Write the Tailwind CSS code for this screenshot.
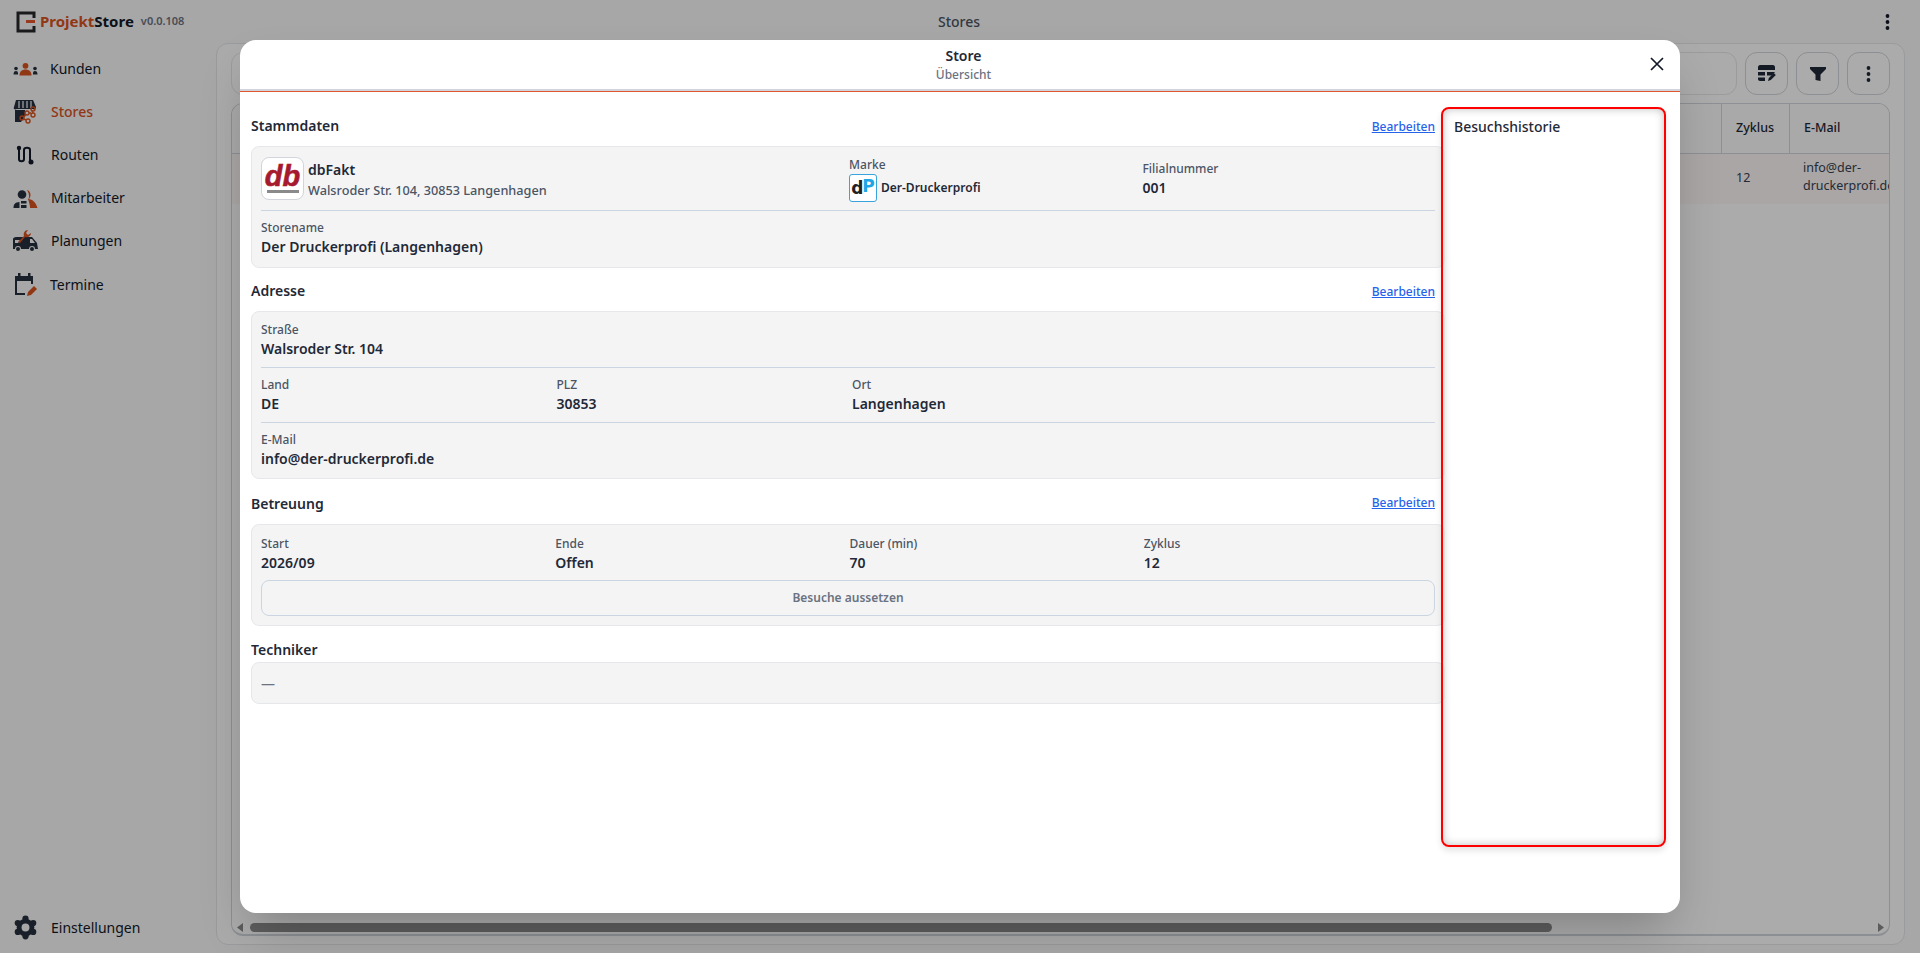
<!DOCTYPE html>
<html lang="de">
<head>
<meta charset="UTF-8" />
<title>ProjektStore - Stores</title>
<script src="https://cdn.jsdelivr.net/npm/@tailwindcss/browser@4"></script>
</head>
<body class="h-screen overflow-hidden bg-[#f9f9fa] text-[#1f2937] [font-family:'Noto_Sans',sans-serif]">

<!-- App dahinter -->
<div class="flex h-[953px] flex-col">
  <header class="flex h-[43px] shrink-0 items-center pl-[16px] pr-[30px]">
    <div class="flex w-[700px] items-center">
      <svg class="h-[22px] w-[20px]" viewBox="0 0 20 22"><path d="M18 7V2H2v18h16v-5" fill="none" stroke="#27272a" stroke-width="3"/><path d="M10 9h9v3h-9z" fill="#e4572e"/></svg>
      <span class="ml-[4px] text-[15px] font-bold text-[#111827]"><span class="text-[#d9531e]">Projekt</span>Store</span>
      <span class="ml-[7px] text-[11px] font-semibold text-[#6b7280]">v0.0.108</span>
    </div>
    <div class="flex-1 pl-[222px] text-[14px] font-medium text-[#4b5563]">Stores</div>
    <svg class="h-[16px] w-[5px]" viewBox="0 0 5 16" fill="#111827"><circle cx="2.5" cy="2" r="1.9"/><circle cx="2.5" cy="8" r="1.9"/><circle cx="2.5" cy="14" r="1.9"/></svg>
  </header>

  <div class="flex min-h-0 flex-1">
    <aside class="flex w-[216px] shrink-0 flex-col pb-[4px] pt-[4px] text-[14px] text-[#111827]">
      <a class="flex h-[43px] items-center gap-[13px] pl-[13px]">
        <svg class="h-[25px] w-[25px]" viewBox="0 0 25 25"><circle cx="12.5" cy="9.800" r="2.900" fill="#d9531e"/><path d="M6.500 19.500c0-4 2.500-6 6-6s6 2 6 6z" fill="#d9531e"/><circle cx="3" cy="12.500" r="1.800" fill="#27303f"/><path d="M0.500 18.500c0-2.500 1-3.500 2.500-3.500s2.200 1 2 3.500z" fill="#27303f"/><circle cx="22" cy="12.500" r="1.800" fill="#27303f"/><path d="M24.500 18.500c0-2.500-1-3.500-2.500-3.500s-2.200 1-2 3.500z" fill="#27303f"/></svg>
        <span class="-ml-[1px]">Kunden</span>
      </a>
      <a class="flex h-[43px] items-center gap-[13px] pl-[13px] font-medium text-[#d9531e]">
        <svg class="h-[25px] w-[25px]" viewBox="0 0 25 25"><path d="M3 1h17l3 7c0 2-2 3-3 2H4C2 11 0 10 1 8z" fill="#27303f"/><path d="M6 2v7M10 2v7M14 2v7M18 2v7" stroke="#f9f9fa" stroke-width="1.200"/><path d="M2 11h10v6l-4 6H2z" fill="#27303f"/><g fill="none" stroke="#d9531e" stroke-width="1.400"><circle cx="20" cy="10" r="2"/><circle cx="20" cy="16" r="2"/><circle cx="14" cy="14" r="2"/><circle cx="9" cy="19" r="2"/><circle cx="15" cy="22" r="2"/><path d="M16 14h2M19 12l1 2M11 18l2-3M11 20l2 1"/></g></svg>
        <span>Stores</span>
      </a>
      <a class="flex h-[43px] items-center gap-[13px] pl-[13px]">
        <svg class="h-[25px] w-[25px]" viewBox="0 0 25 25"><path d="M6 6v11c0 3 5 3 5 0V8c0-3 6-3 6 0v11" fill="none" stroke="#111827" stroke-width="2"/><circle cx="6" cy="6" r="2.200" fill="#111827"/><circle cx="18" cy="20" r="2.500" fill="#111827"/></svg>
        <span>Routen</span>
      </a>
      <a class="flex h-[43px] items-center gap-[13px] pl-[13px]">
        <svg class="h-[25px] w-[25px]" viewBox="0 0 25 25"><circle cx="9" cy="9.500" r="4.300" fill="#27303f"/><path d="M14 5c4 1 5 7 1 10 2-3 1-7-1-10z" fill="#d9531e"/><path d="M0.500 23c0-4 1.500-5.500 6-6v6z" fill="#27303f"/><path d="M8 16h5.500v2.500H8zM8 20h5.500v3H8z" fill="#27303f"/><path d="M15 14c5 0 8 4 9.500 9H17c0-3-1-6-2-9z" fill="#d9531e"/></svg>
        <span>Mitarbeiter</span>
      </a>
      <a class="flex h-[43px] items-center gap-[13px] pl-[13px]">
        <svg class="h-[25px] w-[25px]" viewBox="0 0 25 25"><path d="M3 9h13l3 0 5 6 1 6h-3a3 3 0 0 0-6 0H8a3 3 0 0 0-6 0H0V11c0-1 1.500-2 3-2z" fill="#27303f"/><path d="M17 11h2l3 4h-5z" fill="#f9f9fa"/><path d="M2 12h5l-2 3H2z" fill="#f9f9fa"/><circle cx="5" cy="21" r="2" fill="#27303f"/><circle cx="19" cy="21" r="2" fill="#27303f"/><path d="M5 14l6-6c-1-3 1-6 4-6l-2 3 2 2 3-2c0 3-3 5-6 4l-5 6z" fill="#d9531e"/></svg>
        <span>Planungen</span>
      </a>
      <a class="mt-[1px] flex h-[43px] items-center gap-[13px] pl-[13px]">
        <svg class="h-[25px] w-[25px]" viewBox="0 0 25 25"><path d="M2 4h18v8h-2V9H4v12h8v2H2z" fill="#27303f"/><path d="M5 1h2.500v4H5zM15 1h2.500v4H15z" fill="#27303f"/><path d="M14 24l1-4 6-6 3 3-6 6z" fill="#d9531e"/></svg>
        <span class="-ml-[1px]">Termine</span>
      </a>
      <a class="mt-auto flex h-[43px] items-center gap-[13px] pl-[13px]">
        <svg class="h-[25px] w-[25px]" viewBox="0 0 24 24"><g fill="#27303f"><circle cx="12" cy="12" r="8.500"/><circle cx="12" cy="3.500" r="3"/><circle cx="12" cy="20.500" r="3"/><circle cx="4.600" cy="7.750" r="3"/><circle cx="19.400" cy="7.750" r="3"/><circle cx="4.600" cy="16.250" r="3"/><circle cx="19.400" cy="16.250" r="3"/></g><circle cx="12" cy="12" r="3.800" fill="#f9f9fa"/></svg>
        <span>Einstellungen</span>
      </a>
    </aside>

    <main class="mb-[8px] mr-[15px] flex min-w-0 flex-1 flex-col rounded-xl border border-[#e5e7eb] bg-white px-[14px] pb-[8px] pt-[8px]">
      <div class="flex h-[43px] shrink-0 gap-[8px]">
        <div class="flex-1 rounded-xl border border-[#e5e7eb]"></div>
        <div class="flex w-[43px] items-center justify-center rounded-xl border border-[#d1d5db]">
          <svg class="h-[18px] w-[18px]" viewBox="0 0 18 18" fill="#1f2937"><path d="M0 2c0-1 1-2 2-2h13c1 0 2 1 2 2v3H0zM0 7h7v3.500H0zM9 7h8l-3 3.500H9zM0 12.500h7V16H2c-1 0-2-1-2-2z"/><path d="M10 16l.800-3 5-5 2 2-5 5z"/></svg>
        </div>
        <div class="flex w-[43px] items-center justify-center rounded-xl border border-[#d1d5db]">
          <svg class="h-[16px] w-[16px]" viewBox="0 0 16 16" fill="#1f2937"><path d="M0 1h16v2l-5.500 5.500V15l-5-1V8.500L0 3z"/></svg>
        </div>
        <div class="flex w-[43px] items-center justify-center rounded-xl border border-[#d1d5db]">
          <svg class="h-[16px] w-[5px]" viewBox="0 0 5 16" fill="#1f2937"><circle cx="2.500" cy="2" r="1.900"/><circle cx="2.500" cy="8" r="1.900"/><circle cx="2.500" cy="14" r="1.900"/></svg>
        </div>
      </div>
      <div class="mt-[8px] flex min-h-0 flex-1 flex-col overflow-hidden rounded-xl border border-b-2 border-[#d1d5db]">
        <div class="flex h-[50px] shrink-0 border-b border-[#d1d5db] bg-[#fcfcfd] text-[12.500px] font-medium">
          <div class="flex-1"></div>
          <div class="flex w-[68px] items-center border-l border-[#d1d5db] pl-[14px]">Zyklus</div>
          <div class="flex w-[100px] items-center border-l border-[#d1d5db] pl-[14px]">E-Mail</div>
        </div>
        <div class="flex h-[50px] shrink-0 bg-[#fdf8f6] text-[12.500px] text-[#374151]">
          <div class="flex-1"></div>
          <div class="flex w-[68px] items-center pb-[2px] pl-[15px]">12</div>
          <div class="w-[100px] overflow-hidden whitespace-nowrap pl-[14px] pt-[5px] leading-[18px]">info@der-<br/>druckerprofi.de</div>
        </div>
        <div class="flex-1"></div>
        <div class="relative flex h-[13px] shrink-0 items-center justify-between px-[5px]">
          <svg class="h-[9px] w-[6px]" viewBox="0 0 6 9" fill="#8a8a8a"><path d="M6 0v9L0 4.500z"/></svg>
          <div class="absolute left-[18px] top-[2px] h-[9px] w-[1302px] rounded-full bg-[#8c8c8c]"></div>
          <svg class="h-[9px] w-[6px]" viewBox="0 0 6 9" fill="#8a8a8a"><path d="M0 0v9l6-4.500z"/></svg>
        </div>
      </div>
    </main>
  </div>
</div>

<!-- Overlay + Dialog -->
<div class="absolute inset-0 flex items-center justify-center bg-black/[0.33]">
  <div class="relative flex h-[873px] w-[1440px] flex-col overflow-hidden rounded-2xl bg-white shadow-2xl">
    <div class="relative flex h-[52px] shrink-0 flex-col items-center border-b-[3px] border-[#d1d5db] pl-[7px] pt-[5px]">
      <div class="text-[14px] font-semibold leading-[21px]">Store</div>
      <div class="text-[12px] font-medium leading-[18px] text-[#6b7280]">Übersicht</div>
      <div class="absolute inset-x-0 bottom-[-3px] h-px bg-[#e4572e]"></div>
      <svg class="absolute right-[16px] top-[17px] h-[14px] w-[14px]" viewBox="0 0 14 14" fill="none" stroke="#111827" stroke-width="1.700"><path d="M1 1l12 12M13 1L1 13"/></svg>
    </div>

    <div class="flex min-h-0 flex-1">
      <div class="w-[1205px] shrink-0 pl-[11px]">
        <!-- Stammdaten -->
        <div class="flex h-[54px] items-center justify-between pr-[10px] pt-[15px]">
          <h2 class="pb-[2px] text-[14px] font-semibold">Stammdaten</h2>
          <a class="text-[12px] font-medium text-[#2563eb] underline">Bearbeiten</a>
        </div>
        <section class="h-[122px] rounded-lg border border-[#e5e7eb] bg-[#f4f4f5] px-[9px]">
          <div class="grid h-[64px] grid-cols-4 border-b border-[#cbd5e1]">
            <div class="col-span-2 flex items-center gap-[4px] pb-[2px] pt-[1px]">
              <div class="flex h-[43px] w-[43px] shrink-0 flex-col items-center justify-center rounded-lg border border-[#d1d5db] bg-white">
                <span class="text-[29px] font-bold italic leading-[26px] text-[#a6192e] [-webkit-text-stroke:0.6px_#a6192e] [font-family:'Liberation_Sans',sans-serif]">db</span>
                <span class="mt-[1px] h-[3px] w-[32px] bg-[#8a8a8a]"></span>
              </div>
              <div class="pt-[3px]">
                <div class="text-[14px] font-semibold leading-[21px]">dbFakt</div>
                <div class="text-[12.700px] font-medium leading-[21px] text-[#4b5563]">Walsroder Str. 104, 30853 Langenhagen</div>
              </div>
            </div>
            <div class="pl-[1px] pt-[9px]">
              <div class="text-[12px] font-medium leading-[17px] text-[#4b5563]">Marke</div>
              <div class="mt-[1px] flex items-center gap-[4px]">
                <div class="flex h-[28px] w-[28px] items-center justify-center rounded-[3px] border border-[#38a3dc] bg-white text-[17px] font-bold leading-none [font-family:'DejaVu_Sans',sans-serif]"><span class="text-[#222]">d</span><span class="-ml-[1px] -mt-[3px] text-[#1ea5e5]">P</span></div>
                <span class="text-[12px] font-semibold">Der-Druckerprofi</span>
              </div>
            </div>
            <div class="pl-[1px] pt-[13px]">
              <div class="text-[12px] font-medium leading-[17px] text-[#4b5563]">Filialnummer</div>
              <div class="text-[14px] font-semibold leading-[21px]">001</div>
            </div>
          </div>
          <div class="pt-[8px]">
            <div class="text-[12px] font-medium leading-[17px] text-[#4b5563]">Storename</div>
            <div class="text-[14px] font-semibold leading-[21px]">Der Druckerprofi (Langenhagen)</div>
          </div>
        </section>

        <!-- Adresse -->
        <div class="flex h-[43px] items-center justify-between pr-[10px] pt-[2px]">
          <h2 class="text-[14px] font-semibold">Adresse</h2>
          <a class="mt-[3px] text-[12px] font-medium text-[#2563eb] underline">Bearbeiten</a>
        </div>
        <section class="h-[168px] rounded-lg border border-[#e5e7eb] bg-[#f4f4f5] px-[9px]">
          <div class="h-[56px] border-b border-[#cbd5e1] pt-[9px]">
            <div class="text-[12px] font-medium leading-[17px] text-[#4b5563]">Straße</div>
            <div class="text-[14px] font-semibold leading-[21px]">Walsroder Str. 104</div>
          </div>
          <div class="grid h-[55px] grid-cols-4 gap-[8px] border-b border-[#cbd5e1] pt-[8px]">
            <div>
              <div class="text-[12px] font-medium leading-[17px] text-[#4b5563]">Land</div>
              <div class="text-[14px] font-semibold leading-[21px]">DE</div>
            </div>
            <div>
              <div class="text-[12px] font-medium leading-[17px] text-[#4b5563]">PLZ</div>
              <div class="text-[14px] font-semibold leading-[21px]">30853</div>
            </div>
            <div>
              <div class="text-[12px] font-medium leading-[17px] text-[#4b5563]">Ort</div>
              <div class="text-[14px] font-semibold leading-[21px]">Langenhagen</div>
            </div>
          </div>
          <div class="pt-[8px]">
            <div class="text-[12px] font-medium leading-[17px] text-[#4b5563]">E-Mail</div>
            <div class="text-[14px] font-semibold leading-[21px]">info@der-druckerprofi.de</div>
          </div>
        </section>

        <!-- Betreuung -->
        <div class="flex h-[45px] items-center justify-between pr-[10px] pt-[3px]">
          <h2 class="text-[14px] font-semibold">Betreuung</h2>
          <a class="text-[12px] font-medium text-[#2563eb] underline">Bearbeiten</a>
        </div>
        <section class="h-[102px] rounded-lg border border-[#e5e7eb] bg-[#f4f4f5] px-[9px] pt-[10px]">
          <div class="grid grid-cols-4 gap-[3px]">
            <div>
              <div class="text-[12px] font-medium leading-[17px] text-[#4b5563]">Start</div>
              <div class="text-[14px] font-semibold leading-[21px]">2026/09</div>
            </div>
            <div>
              <div class="text-[12px] font-medium leading-[17px] text-[#4b5563]">Ende</div>
              <div class="text-[14px] font-semibold leading-[21px]">Offen</div>
            </div>
            <div>
              <div class="text-[12px] font-medium leading-[17px] text-[#4b5563]">Dauer (min)</div>
              <div class="text-[14px] font-semibold leading-[21px]">70</div>
            </div>
            <div>
              <div class="text-[12px] font-medium leading-[17px] text-[#4b5563]">Zyklus</div>
              <div class="text-[14px] font-semibold leading-[21px]">12</div>
            </div>
          </div>
          <div class="mt-[7px] flex h-[36px] items-center justify-center rounded-lg border border-[#cbd5e1] text-[12px] font-semibold text-[#6b7280]">Besuche aussetzen</div>
        </section>

        <!-- Techniker -->
        <h2 class="flex h-[36px] items-end pb-[2px] text-[14px] font-semibold">Techniker</h2>
        <section class="flex h-[42px] items-center rounded-lg border border-[#e5e7eb] bg-[#f4f4f5] px-[9px] text-[14px] text-[#6b7280]">—</section>
      </div>
    </div>

    <!-- Besuchshistorie liegt ueber den Karten -->
    <div class="absolute left-[1201px] top-[67px] h-[740px] w-[225px] rounded-lg border-2 border-[#ff0000] bg-white/60 px-[11px] py-[8px] shadow-[0_4px_6px_rgba(0,0,0,0.1),inset_0_0_8px_rgba(0,0,0,0.25)]">
      <h3 class="text-[14px] font-medium leading-[20px] text-[#1f2937]">Besuchshistorie</h3>
    </div>
  </div>
</div>

</body>
</html>
